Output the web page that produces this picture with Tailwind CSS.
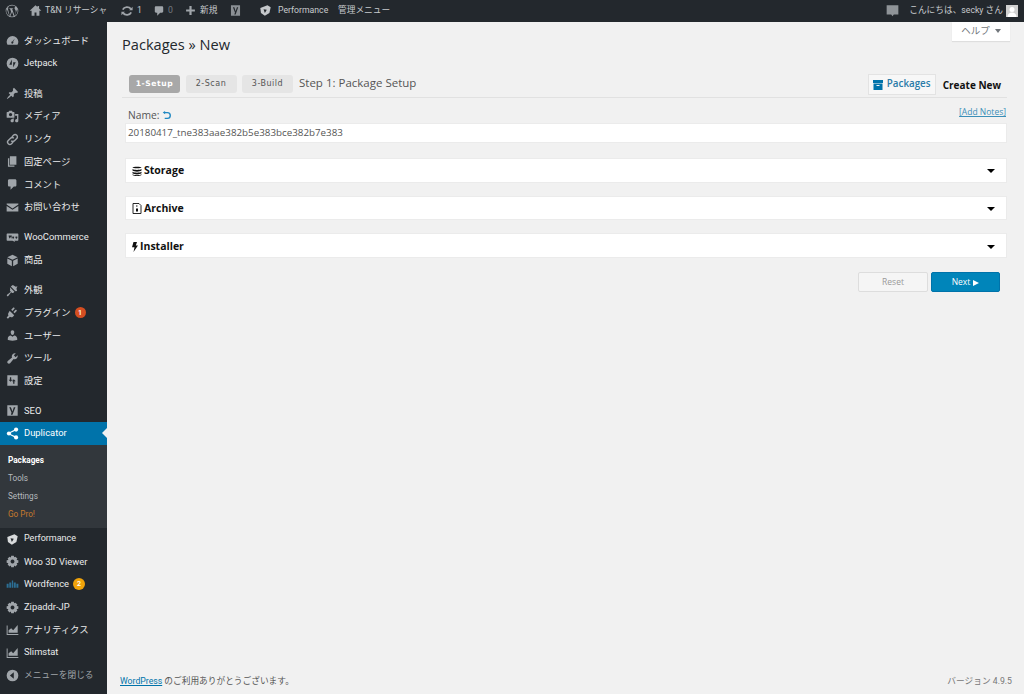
<!DOCTYPE html>
<html lang="ja">
<head>
<meta charset="UTF-8">
<title>Packages New</title>
<script src="https://cdn.jsdelivr.net/npm/@tailwindcss/browser@4"></script>
</head>
<body class="w-[1024px] h-[694px] overflow-hidden bg-[#f1f1f1] font-['Open_Sans','Noto_Sans_CJK_JP',sans-serif] text-[#444]">

<!-- admin bar -->
<header class="h-[21.5px] bg-[#23282d] text-[#c8cbce] text-[8.7px] font-['Roboto','Noto_Sans_CJK_JP',sans-serif] flex items-center whitespace-nowrap">
  <svg class="w-[14px] h-[14px] ml-[5px] text-[#a0a5aa]" viewBox="0 0 20 20" fill="currentColor"><path fill-rule="evenodd" d="M10 1a9 9 0 1 0 0 18 9 9 0 0 0 0-18zm0 1a8 8 0 0 1 5.400 2.100c-1.100 0-1.800.9-1.800 1.800 0 .9.5 1.600 1 2.400.4.7.8 1.500.8 2.700 0 .8-.3 1.800-.7 3.100l-1 3.200-3.400-10.300c.6 0 1.100-.1 1.100-.1.5-.1.4-.8-.1-.8 0 0-1.500.1-2.500.1-.9 0-2.400-.1-2.400-.1-.5 0-.6.8-.1.8 0 0 .5.100 1 .100l1.400 4-2 6.100L4 6.200c.6 0 1.100-.1 1.100-.1.5-.1.4-.8-.1-.8l-1.500.1A8 8 0 0 1 10 2zM2.600 7l3.800 10.500A8 8 0 0 1 2.600 7zm7.500 4l2.300 6.500a8 8 0 0 1-4.800.1zm7.100-3.800A8 8 0 0 1 14 17.200l2.300-6.700c.5-1.100.8-2 .8-2.700z"/></svg>
  <svg class="w-[13px] h-[13px] ml-[10px] text-[#a0a5aa]" viewBox="0 0 20 20" fill="currentColor"><path d="M10 2 1 10.500h3V18h4.500v-5h3v5H16v-7.500h3L15.500 7V3H13v1.800z"/></svg>
  <span class="ml-[3px] w-[63px]">T&amp;N リサーシャ</span>
  <svg class="w-[14px] h-[14px] ml-[12px] text-[#a0a5aa]" viewBox="0 0 20 20" fill="none" stroke="currentColor" stroke-width="2.600"><path d="M4 8a6.500 5.500 0 0 1 11.500-1M16 12a6.500 5.500 0 0 1-11.500 1"/><path d="M18 4v5h-5zM2 16v-5h5z" fill="currentColor" stroke="none"/></svg>
  <span class="ml-[3px] w-[5px]">1</span>
  <svg class="w-[12px] h-[12px] ml-[11px] text-[#a0a5aa]" viewBox="0 0 20 20" fill="currentColor"><path d="M5 2h10c1.100 0 2 .9 2 2v7c0 1.100-.9 2-2 2h-3l-5 5v-5H5c-1.100 0-2-.9-2-2V4c0-1.100.9-2 2-2z"/></svg>
  <span class="ml-[3px] w-[5px] text-[#757a80]">0</span>
  <svg class="w-[11px] h-[11px] ml-[12px] text-[#a0a5aa]" viewBox="0 0 20 20" fill="currentColor"><path d="M8 2h4v6h6v4h-6v6H8v-6H2V8h6z"/></svg>
  <span class="ml-[4px] w-[18px]">新規</span>
  <svg class="w-[13px] h-[13px] ml-[11px] text-[#8b9095]" viewBox="0 0 20 20" fill="currentColor"><path fill-rule="evenodd" d="M3 2h14v16H3zm3 3 3.200 8-1 3h2l4-11h-2l-2 6-2-6z"/></svg>
  <svg class="w-[13px] h-[13px] ml-[17px] text-[#c5c8cb]" viewBox="0 0 20 20" fill="currentColor"><path fill-rule="evenodd" d="M2 6 13 2l5 3-2 9-7 4-6-4zM7 8l5 1-3 5z"/></svg>
  <span class="ml-[6px] w-[48px]">Performance</span>
  <span class="ml-[12px]">管理メニュー</span>
  <svg class="w-[13px] h-[13px] ml-auto text-[#8f9498]" viewBox="0 0 20 20" fill="currentColor"><path d="M1 2h18v14h-7l-2 3-2-3H1z"/></svg>
  <span class="ml-[10px]">こんにちは、secky さん</span>
  <span class="w-[12px] h-[12px] ml-[3px] mr-[6px] bg-[#d0d0d0] flex items-end justify-center overflow-hidden">
    <svg class="w-[12px] h-[12px] text-white" viewBox="0 0 12 12" fill="currentColor"><circle cx="6" cy="4.500" r="2.500"/><path d="M1.500 12c0-3 2-4.500 4.500-4.500s4.500 1.500 4.500 4.500z"/></svg>
  </span>
</header>

<div class="flex h-[672.5px]">
  <!-- sidebar -->
  <nav class="w-[107px] shrink-0 bg-[#23282d] text-[#eaebec] text-[9.300px] font-['Roboto','Noto_Sans_CJK_JP',sans-serif] pt-[8px] flex flex-col whitespace-nowrap">
    <a class="h-[22.7px] flex items-center pl-[6px]"><svg class="w-[13px] h-[13px] mr-[5px] text-[#a0a5aa]" viewBox="0 0 20 20" fill="currentColor"><path fill-rule="evenodd" d="M10 3a9 9 0 0 0-9 9c0 1.700.5 3.300 1.300 4.600h15.400A9 9 0 0 0 19 12a9 9 0 0 0-9-9zm3.500 4L11 12.100a1.600 1.600 0 1 1-1.200-.6z"/></svg>ダッシュボード</a>
    <a class="h-[22.7px] flex items-center pl-[6px] text-[9.400px]"><svg class="w-[13px] h-[13px] mr-[5px] text-[#a0a5aa]" viewBox="0 0 20 20" fill="currentColor"><path fill-rule="evenodd" d="M10 1a9 9 0 1 0 0 18 9 9 0 0 0 0-18zM9 4v8H5zm2 4h4l-4 8z"/></svg>Jetpack</a>

    <div class="h-[7.5px]"></div>
    <a class="h-[22.7px] flex items-center pl-[6px]"><svg class="w-[13px] h-[13px] mr-[5px] text-[#a0a5aa]" viewBox="0 0 20 20" fill="currentColor"><path d="M10.440 3.020l1.820-1.820 6.360 6.350-1.830 1.820c-1.050-.68-2.480-.57-3.410.36l-.75.75c-.92.93-1.040 2.350-.35 3.410l-1.830 1.820-2.410-2.410-2.800 2.790c-.42.42-3.380 2.710-3.800 2.290s1.860-3.390 2.280-3.810l2.790-2.790L4.100 9.360l1.830-1.820c1.050.69 2.480.57 3.400-.36l.75-.75c.93-.92 1.050-2.350.36-3.410z"/></svg>投稿</a>
    <a class="h-[22.7px] flex items-center pl-[6px]"><svg class="w-[13px] h-[13px] mr-[5px] text-[#a0a5aa]" viewBox="0 0 20 20" fill="currentColor"><path fill-rule="evenodd" d="M13 11V4c0-.55-.45-1-1-1h-1.670L9 1H5L3.670 3H2c-.55 0-1 .45-1 1v7c0 .55.45 1 1 1h10c.55 0 1-.45 1-1zM7 4.500c1.380 0 2.500 1.120 2.500 2.500S8.380 9.500 7 9.500 4.500 8.380 4.500 7 5.620 4.500 7 4.500zM14 6h5v10.500c0 1.380-1.120 2.500-2.500 2.500S14 17.880 14 16.500s1.120-2.500 2.500-2.500c.17 0 .34.020.5.050V9h-3V6zm-4 8.050V13h2v3.500c0 1.380-1.120 2.500-2.500 2.500S7 17.880 7 16.500 8.120 14 9.500 14c.17 0 .34.020.5.050z"/></svg>メディア</a>
    <a class="h-[22.7px] flex items-center pl-[6px]"><svg class="w-[13px] h-[13px] mr-[5px] text-[#a0a5aa]" viewBox="0 0 20 20" fill="none" stroke="currentColor" stroke-width="2.200"><path d="M9 6l2.500-2.500a3.500 3.500 0 0 1 5 5L13 12a3.500 3.500 0 0 1-5 0"/><path d="M11 14l-2.500 2.500a3.500 3.500 0 0 1-5-5L7 8a3.500 3.500 0 0 1 5 0"/></svg>リンク</a>
    <a class="h-[22.7px] flex items-center pl-[6px]"><svg class="w-[13px] h-[13px] mr-[5px] text-[#a0a5aa]" viewBox="0 0 20 20" fill="currentColor"><path d="M6 15V2h10v13H6zm-1 1h8v2H3V5h2v11z"/></svg>固定ページ</a>
    <a class="h-[22.7px] flex items-center pl-[6px]"><svg class="w-[13px] h-[13px] mr-[5px] text-[#a0a5aa]" viewBox="0 0 20 20" fill="currentColor"><path d="M5 2h9c1.100 0 2 .9 2 2v7c0 1.100-.9 2-2 2h-2l-5 5v-5H5c-1.100 0-2-.9-2-2V4c0-1.100.9-2 2-2z"/></svg>コメント</a>
    <a class="h-[22.7px] flex items-center pl-[6px]"><svg class="w-[13px] h-[13px] mr-[5px] text-[#a0a5aa]" viewBox="0 0 20 20" fill="currentColor"><path d="M1 4h18v1.500l-9 6-9-6z"/><path d="M1 7.500l9 6 9-6V16H1z"/></svg>お問い合わせ</a>

    <div class="h-[7.5px]"></div>
    <a class="h-[22.7px] flex items-center pl-[6px] text-[9.400px]"><svg class="w-[13px] h-[13px] mr-[5px] text-[#a0a5aa]" viewBox="0 0 20 20" fill="currentColor"><path fill-rule="evenodd" d="M2 4h16a1 1 0 0 1 1 1v9a1 1 0 0 1-1 1h-5l1 2-4-2H2a1 1 0 0 1-1-1V5a1 1 0 0 1 1-1zm2 3 1 5 1.500-3 1.500 3 1-5zm7 1.500a1.500 1.500 0 1 0 .01 0zm5 0a1.500 1.500 0 1 0 .01 0z"/></svg>WooCommerce</a>
    <a class="h-[22.7px] flex items-center pl-[6px]"><svg class="w-[13px] h-[13px] mr-[5px] text-[#a0a5aa]" viewBox="0 0 20 20" fill="currentColor"><path d="M10 1l8 4-8 4-8-4z"/><path d="M2 7l7 3.500V19l-7-4zM18 7l-7 3.500V19l7-4z"/></svg>商品</a>

    <div class="h-[7.5px]"></div>
    <a class="h-[22.7px] flex items-center pl-[6px]"><svg class="w-[13px] h-[13px] mr-[5px] text-[#a0a5aa]" viewBox="0 0 20 20" fill="currentColor"><path d="M14.500 11 7.400 4l1.500-1.500c.5-.6 2.300-.5 3.500.3 1.200.8 1.400 1.300 2.700 1.300.8 0 1.800-.4 2.400-.8-.2 1.400-1.300 2.700-1.300 4 0 1.200.6 2.200.9 3.300zM6 5l7 7-1.500 1.500c-.7.7-1.800.7-2.500 0L8 12.500l-4.500 6c-.5.5-1.400.5-1.900 0s-.5-1.400 0-1.900l6-4.500L6.500 11c-.7-.7-.7-1.800 0-2.500z"/></svg>外観</a>
    <a class="h-[22.7px] flex items-center pl-[6px]"><svg class="w-[13px] h-[13px] mr-[5px] text-[#a0a5aa]" viewBox="0 0 20 20" fill="currentColor"><path d="M13.110 4.360L9.870 7.600 8 5.730l3.240-3.240c.35-.34 1.050-.25 1.540.24.49.49.58 1.190.33 1.630zm3.400 3.400l-3.240 3.240-1.870-1.870 3.240-3.240c.35-.34 1.050-.25 1.540.24.49.49.58 1.190.33 1.630zM5.650 7.400l7 7L11 16c-1.500 1.500-3.600 1.600-5 .7L3 19.500 1 17.500l2.800-3c-.9-1.500-.8-3.500.7-5z"/></svg>プラグイン<span class="ml-[4px] w-[11px] h-[11px] rounded-full bg-[#d54e21] text-white text-[7px] font-semibold flex items-center justify-center">1</span></a>
    <a class="h-[22.7px] flex items-center pl-[6px]"><svg class="w-[13px] h-[13px] mr-[5px] text-[#a0a5aa]" viewBox="0 0 20 20" fill="currentColor"><path d="M10 9.250c-2.270 0-2.730-3.440-2.730-3.440C7 4.020 7.820 2 9.970 2c2.160 0 2.980 2.020 2.710 3.810 0 0-.41 3.440-2.680 3.440zm0 2.570L12.720 10c2.390 0 4.520 2.330 4.520 4.530v2.490s-3.650 1.130-7.240 1.130c-3.650 0-7.240-1.130-7.240-1.130v-2.490c0-2.250 1.940-4.480 4.470-4.480z"/></svg>ユーザー</a>
    <a class="h-[22.7px] flex items-center pl-[6px]"><svg class="w-[13px] h-[13px] mr-[5px] text-[#a0a5aa]" viewBox="0 0 20 20" fill="currentColor"><path d="M16.680 9.770c-1.340 1.340-3.300 1.670-4.950.99l-5.410 6.520c-.99.99-2.590.99-3.580 0s-.99-2.590 0-3.570l6.520-5.420c-.68-1.650-.35-3.610.99-4.950 1.280-1.280 3.120-1.620 4.720-1.060l-2.890 2.890 2.820 2.820 2.860-2.860c.53 1.580.18 3.400-1.080 4.640z"/></svg>ツール</a>
    <a class="h-[22.7px] flex items-center pl-[6px]"><svg class="w-[13px] h-[13px] mr-[5px] text-[#a0a5aa]" viewBox="0 0 20 20" fill="currentColor"><path fill-rule="evenodd" d="M2 2h16v16H2zm4 3v4H4l3 3 3-3H8V5zm5 10V11H9l3-3 3 3h-2v4z"/></svg>設定</a>

    <div class="h-[7px]"></div>
    <a class="h-[22.7px] flex items-center pl-[6px] text-[9.400px]"><svg class="w-[13px] h-[13px] mr-[5px] text-[#a0a5aa]" viewBox="0 0 20 20" fill="currentColor"><path fill-rule="evenodd" d="M2 2h16v16H2zm3 3 3.500 8-1 3.500h2.500l4.500-11.500h-2.500l-2 6.500-2.500-6.500z"/></svg>SEO</a>
    <a class="relative h-[22.700px] flex items-center pl-[6px] bg-[#0073aa] text-white text-[9.400px]"><svg class="w-[13px] h-[13px] mr-[5px] text-white" viewBox="0 0 20 20" fill="currentColor"><circle cx="15.500" cy="4" r="3.200"/><circle cx="4.500" cy="10" r="3.200"/><circle cx="15.500" cy="16" r="3.200"/><path d="M4 9l11-6 1 2-11 5zM5 10l11 5-1 2-11-6z"/></svg>Duplicator<span class="absolute right-0 top-[6px] w-0 h-0 border-y-[5.500px] border-y-transparent border-r-[5.500px] border-r-[#f1f1f1]"></span></a>
    <div class="bg-[#32373c] h-[83px] pt-[6px] pl-[8px] text-[8.200px] text-[#b4b9be]">
      <a class="h-[18.200px] flex items-center font-bold text-white">Packages</a>
      <a class="h-[18.200px] flex items-center">Tools</a>
      <a class="h-[18.200px] flex items-center">Settings</a>
      <a class="h-[18.200px] flex items-center text-[#c67a2d]">Go Pro!</a>
    </div>
    <div class="text-[9.400px]">
      <a class="h-[22.700px] flex items-center pl-[6px] text-[9px]"><svg class="w-[13px] h-[13px] mr-[5px] text-[#d8dadc]" viewBox="0 0 20 20" fill="currentColor"><path fill-rule="evenodd" d="M2 6 13 2l5 3-2 9-7 4-6-4zM7 8l5 1-3 5z"/></svg>Performance</a>
      <a class="h-[22.700px] flex items-center pl-[6px]"><svg class="w-[13px] h-[13px] mr-[5px] text-[#a0a5aa]" viewBox="0 0 20 20" fill="currentColor"><path fill-rule="evenodd" d="M8 1h4l.5 2.500 2-1 3 3-1.200 2L19 8v4l-2.700.5 1.200 2-3 3-2-1.200L12 19H8l-.5-2.700-2 1.200-3-3 1.200-2L1 12V8l2.700-.5-1.200-2 3-3 2 1.200zM10 7a3 3 0 1 0 .01 0z"/></svg>Woo 3D Viewer</a>
      <a class="h-[22.700px] flex items-center pl-[6px]"><svg class="w-[13px] h-[13px] mr-[5px] text-[#2c6f95]" viewBox="0 0 20 20" fill="currentColor"><path d="M1 9h3v6H1zM5 7h3v8H5zM9 4h2v11H9zM12 7h3v8h-3zM16 9h3v6h-3z"/></svg>Wordfence<span class="ml-[4px] w-[12px] h-[12px] rounded-full bg-[#f0a30a] text-white text-[7px] font-semibold flex items-center justify-center">2</span></a>
      <a class="h-[22.700px] flex items-center pl-[6px]"><svg class="w-[13px] h-[13px] mr-[5px] text-[#a0a5aa]" viewBox="0 0 20 20" fill="currentColor"><path fill-rule="evenodd" d="M8 1h4l.5 2.500 2-1 3 3-1.200 2L19 8v4l-2.700.5 1.200 2-3 3-2-1.200L12 19H8l-.5-2.700-2 1.200-3-3 1.200-2L1 12V8l2.700-.5-1.200-2 3-3 2 1.200zM10 7a3 3 0 1 0 .01 0z"/></svg>Zipaddr-JP</a>
      <a class="h-[22.700px] flex items-center pl-[6px]"><svg class="w-[13px] h-[13px] mr-[5px] text-[#a0a5aa]" viewBox="0 0 20 20" fill="currentColor"><path d="M1 4h1.500v13H19v1.500H1z"/><path d="M4 15v-4l4-3 3 3 7-8v12z"/></svg>アナリティクス</a>
      <a class="h-[22.700px] flex items-center pl-[6px]"><svg class="w-[13px] h-[13px] mr-[5px] text-[#a0a5aa]" viewBox="0 0 20 20" fill="currentColor"><path d="M1 4h1.500v13H19v1.500H1z"/><path d="M4 15v-4l4-3 3 3 7-8v12z"/></svg>Slimstat</a>
      <a class="h-[22.700px] flex items-center pl-[6px] text-[8.700px] text-[#a0a5aa]"><svg class="w-[13px] h-[13px] mr-[5px] text-[#a0a5aa]" viewBox="0 0 20 20" fill="currentColor"><path fill-rule="evenodd" d="M10 1a9 9 0 1 0 0 18 9 9 0 0 0 0-18zm2 4v10L6 10z"/></svg>メニューを閉じる</a>
    </div>
  </nav>

  <!-- main -->
  <main class="relative flex-1 flex flex-col pl-[15px] pr-[17px]">
    <div class="absolute right-[14px] top-0 w-[58px] h-[19px] bg-white shadow-[0_1px_1px_rgba(0,0,0,0.08)] text-[9.500px] text-[#72777c] flex items-center justify-center gap-[5px]">ヘルプ<span class="w-0 h-0 border-x-[3px] border-x-transparent border-t-[4px] border-t-[#72777c]"></span></div>

    <h1 class="mt-[12px] h-[21px] text-[14.600px] leading-[21px] text-[#23282d]">Packages » New</h1>

    <div class="mt-[18.500px] h-[24.500px] flex items-start border-b border-[#e1e1e1] pl-[7px] pr-[6px]">
      <div class="flex items-center pt-[2px] gap-[5.500px] font-['DejaVu_Sans',sans-serif]">
        <span class="w-[51px] h-[18px] rounded-[3px] bg-[#a8a8a8] text-white text-[7.600px] font-bold tracking-[0.6px] flex items-center justify-center">1-Setup</span>
        <span class="w-[51px] h-[18px] rounded-[3px] bg-[#e5e5e5] text-[#555] text-[8px] tracking-[0.5px] flex items-center justify-center">2-Scan</span>
        <span class="w-[51px] h-[18px] rounded-[3px] bg-[#e5e5e5] text-[#555] text-[8px] tracking-[0.5px] flex items-center justify-center">3-Build</span>
      </div>
      <span class="ml-[6px] text-[11.500px] leading-[19px] text-[#555]">Step 1: Package Setup</span>
      <div class="ml-auto mt-[1px] flex items-center">
        <a class="w-[68px] h-[21px] border border-[#e3e3e3] bg-[#f7f7f7] flex items-center justify-center gap-[4px] text-[#2a7ba8] font-semibold text-[9.800px]"><svg class="w-[10px] h-[10px] text-[#0073aa]" viewBox="0 0 10 10" fill="currentColor"><path fill-rule="evenodd" d="M0 0h10v3H0zM.5 3.500h9V10h-9zm3 1.500v1h3V5z"/></svg>Packages</a>
        <span class="ml-[7px] text-[10px] font-bold text-[#111] leading-[20px]">Create New</span>
      </div>
    </div>

    <div class="mt-[11.500px] h-[14px] flex items-center pl-[6px] pr-[1px] text-[10.300px] text-[#555]">
      Name:
      <svg class="w-[9px] h-[9px] ml-[2px] -mt-[1px] text-[#1d87c2]" viewBox="0 0 10 10" fill="none" stroke="currentColor" stroke-width="1.500"><path d="M2.500 1.800H6a3 3 0 0 1 0 6.400H3"/><path d="M3.500 0v3.600L.8 1.800z" fill="currentColor" stroke="none"/></svg>
      <a class="ml-auto -mt-[7px] text-[8.500px] text-[#3b8fb8] underline">[Add Notes]</a>
    </div>
    <div class="ml-[3px] h-[20px] bg-white border border-[#ebebeb] pl-[2px] text-[9.800px] leading-[18px] text-[#555]">20180417_tne383aae382b5e383bce382b7e383</div>

    <section class="mt-[14.500px] ml-[3px] h-[25.500px] bg-white border border-[#ebebeb] flex items-center px-[6px] pt-[2px] text-[10.500px] font-bold text-[#111]">
      <svg class="w-[10px] h-[10px] mr-[2px]" viewBox="0 0 10 10" fill="currentColor"><path d="M.5 1.500C.5.5 9.500.5 9.500 1.500S.5 2.500.5 1.500zM.5 3c2 1.200 7 1.200 9 0v1.500c-2 1.500-7 1.500-9 0zM.5 5.800c2 1.200 7 1.200 9 0v1.500c-2 1.500-7 1.500-9 0zM.5 8.300c2 1.200 7 1.200 9 0v.7c-2 1.300-7 1.300-9 0z"/></svg>
      Storage
      <span class="ml-auto mr-[5px] w-0 h-0 border-x-[4px] border-x-transparent border-t-[4px] border-t-black"></span>
    </section>
    <section class="mt-[12.500px] ml-[3px] h-[24.500px] bg-white border border-[#ebebeb] flex items-center px-[6px] pt-[2px] text-[10.500px] font-bold text-[#111]">
      <svg class="w-[10px] h-[11px] mr-[2px]" viewBox="0 0 10 11" fill="none" stroke="currentColor" stroke-width="0.900"><path d="M1 .5h6l2 2v8H1z"/><path d="M4 2.500h1.500v1H4zM4 5.500h2v3H4z" fill="currentColor" stroke="none"/></svg>
      Archive
      <span class="ml-auto mr-[5px] w-0 h-0 border-x-[4px] border-x-transparent border-t-[4px] border-t-black"></span>
    </section>
    <section class="mt-[13px] ml-[3px] h-[25px] bg-white border border-[#ebebeb] flex items-center px-[6px] pt-[2px] text-[10.500px] font-bold text-[#111]">
      <svg class="w-[6px] h-[10px] mr-[2px]" viewBox="0 0 6 10" fill="currentColor"><path d="M1.500 0H5L3.800 3.500H6L1.500 10l1-4.800H0z"/></svg>
      Installer
      <span class="ml-auto mr-[5px] w-0 h-0 border-x-[4px] border-x-transparent border-t-[4px] border-t-black"></span>
    </section>

    <div class="mt-[13.500px] flex justify-end items-center gap-[3px] pr-[7px]">
      <button class="w-[70px] h-[19.500px] pt-[2px] rounded-[2px] border border-[#ddd] bg-[#f5f5f5] text-[8.500px] text-[#999]">Reset</button>
      <button class="w-[69px] h-[20.500px] pt-[2px] rounded-[2px] bg-[#0085ba] border border-[#0073aa] text-[8.500px] text-white flex items-center justify-center gap-[3px]">Next<span class="w-0 h-0 border-y-[3.500px] border-y-transparent border-l-[6px] border-l-white"></span></button>
    </div>

    <footer class="mt-auto mb-[6px] flex justify-between text-[8.700px] font-['Roboto','Noto_Sans_CJK_JP',sans-serif] text-[#555] -ml-[2px] -mr-[5px]">
      <span><a class="text-[#0073aa] underline">WordPress</a> のご利用ありがとうございます。</span>
      <span class="text-[#777]">バージョン 4.9.5</span>
    </footer>
  </main>
</div>
</body>
</html>
